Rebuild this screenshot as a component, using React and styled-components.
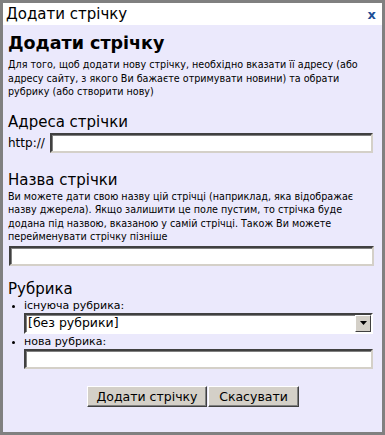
import React from "react";
import styled, { createGlobalStyle } from "styled-components";

const Global = createGlobalStyle`
  html, body { margin: 0; padding: 0; background: #808080; }
  body { font-family: "DejaVu Sans", Verdana, sans-serif; }
`;

const Frame = styled.div`
  width: 385px;
  height: 435px;
  box-sizing: border-box;
  border: 3px solid #808080;
  background: #ebe9fc;
  display: flex;
  flex-direction: column;
`;

const TitleBar = styled.div`
  height: 22px;
  background: #fff;
  display: flex;
  align-items: center;
  justify-content: space-between;
  padding: 0 6px 0 3px;
  font-size: 15px;
  color: #000;
`;

const Close = styled.span`
  color: #1c4f96;
  font-weight: bold;
  font-size: 13px;
  cursor: pointer;
`;

const Body = styled.div`
  padding: 5px 9px 0 5px;
  color: #000;
`;

const H1 = styled.h1`
  margin: 0;
  font-size: 17.5px;
  font-weight: bold;
  line-height: 26px;
`;

const H2 = styled.h2`
  margin: ${(p) => p.$top || 0}px 0 0;
  font-size: 15px;
  font-weight: normal;
  line-height: 17px;
`;

const Text = styled.p`
  margin: ${(p) => p.$top ?? 2}px 0 0;
  font-size: 9.6px;
  line-height: 13.5px;
`;

const Row = styled.div`
  display: flex;
  align-items: center;
  gap: 5px;
  margin-top: ${(p) => p.$top || 0}px;
  font-size: 12px;
`;

const Input = styled.input`
  box-sizing: border-box;
  flex: 1;
  width: ${(p) => (p.$full ? "100%" : "auto")};
  height: 20px;
  margin: ${(p) => p.$m || 0};
  border: 2px solid;
  border-color: #404040 #d4d0c8 #d4d0c8 #404040;
  box-shadow: inset 1px 1px 0 #808080;
  background: #fff;
  display: block;
  outline: none;
`;

const List = styled.ul`
  list-style: none;
  margin: 1px 0 0;
  padding: 0 0 0 16px;
`;

const Item = styled.li`
  font-size: 11px;
  line-height: 14px;
  position: relative;
  &::before {
    content: "";
    position: absolute;
    left: -12px;
    top: 6px;
    width: 3px;
    height: 3px;
    border-radius: 50%;
    background: #000;
  }
`;

const SelectBox = styled.div`
  box-sizing: border-box;
  height: 21px;
  margin: 0 0 1px;
  border: 2px solid;
  border-color: #404040 #fff #fff #404040;
  box-shadow: inset 1px 1px 0 #808080;
  background: #fff;
  display: flex;
  align-items: center;
  justify-content: space-between;
  font-size: 12.5px;
  padding-left: 2px;
`;

const Arrow = styled.span`
  box-sizing: border-box;
  width: 16px;
  height: 17px;
  background: #d4d0c8;
  border: 1px solid;
  border-color: #fff #404040 #404040 #fff;
  display: flex;
  align-items: center;
  justify-content: center;
`;

const Buttons = styled.div`
  display: flex;
  justify-content: center;
  margin-top: 17px;
  padding-left: 4px;
`;

const Button = styled.button`
  box-sizing: border-box;
  height: 21px;
  width: ${(p) => p.$w}px;
  background: #d4d0c8;
  border: 1px solid;
  border-color: #fff #404040 #404040 #fff;
  box-shadow: inset -1px -1px 0 #808080;
  font-family: "DejaVu Sans", Tahoma, sans-serif;
  font-size: 12.5px;
  color: #000;
  padding: 0;
  margin-left: 1px;
`;

export default function App() {
  return (
    <Frame>
      <Global />
      <TitleBar>
        <span>Додати стрічку</span>
        <Close>x</Close>
      </TitleBar>
      <Body>
        <H1>Додати стрічку</H1>
        <Text>
          Для того, щоб додати нову стрічку, необхідно вказати її адресу (або
          адресу сайту, з якого Ви бажаєте отримувати новини) та обрати
          рубрику (або створити нову)
        </Text>
        <H2 $top={15}>Адреса стрічки</H2>
        <Row $top={2}>
          <span>http://</span>
          <Input />
        </Row>
        <H2 $top={19}>Назва стрічки</H2>
        <Text $top={1}>
          Ви можете дати свою назву цій стрічці (наприклад, яка відображає
          назву джерела). Якщо залишити це поле пустим, то стрічка буде
          додана під назвою, вказаною у самій стрічці. Також Ви можете
          перейменувати стрічку пізніше
        </Text>
        <Input $full $m="2px 0 0 1px" />
        <H2 $top={15}>Рубрика</H2>
        <List>
          <Item>
            існуюча рубрика:
            <SelectBox>
              <span>[без рубрики]</span>
              <Arrow>
                <svg width="7" height="4" viewBox="0 0 7 4">
                  <path d="M0 0h7L3.5 4z" fill="#000" />
                </svg>
              </Arrow>
            </SelectBox>
          </Item>
          <Item>
            нова рубрика:
            <Input $full />
          </Item>
        </List>
        <Buttons>
          <Button $w={120}>Додати стрічку</Button>
          <Button $w={91}>Скасувати</Button>
        </Buttons>
      </Body>
    </Frame>
  );
}
